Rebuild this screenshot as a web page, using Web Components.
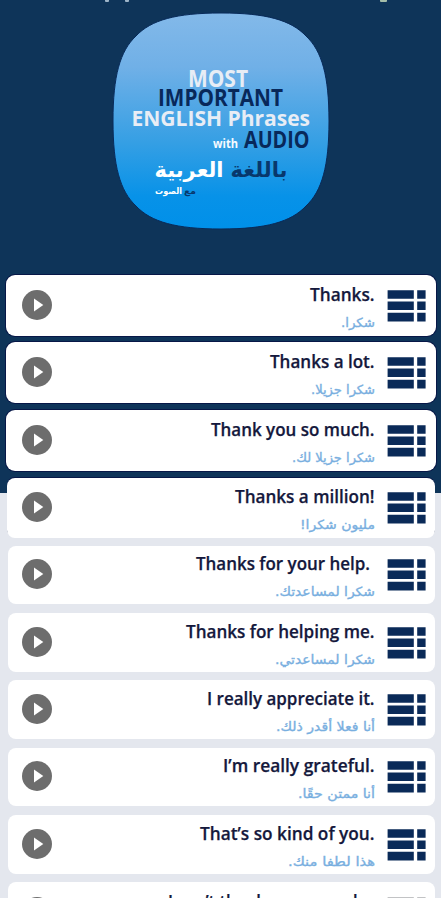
<!DOCTYPE html>
<html lang="en"><head><meta charset="utf-8"><title>Phrases</title>
<style>html,body{margin:0;width:441px;height:900px;overflow:hidden;background:#fff}</style></head><body>
<phrases-screen></phrases-screen>
<script>
const FONT = '"Open Sans","Noto Sans",sans-serif';
class PlayButton extends HTMLElement {
  connectedCallback() {
    this.attachShadow({mode:'open'}).innerHTML = `<style>:host{display:block;width:30px;height:30px}svg{display:block}</style>
    <svg width="30" height="30" viewBox="0 0 30 30"><circle cx="15" cy="15" r="15" fill="#6d6d6d"/><path d="M12 8.5V21.5L21.3 15Z" fill="#fff"/></svg>`;
  }
}
customElements.define('play-button', PlayButton);
class ListIcon extends HTMLElement {
  connectedCallback() {
    const bars = [0,11.3,22.6].map(y=>`<path d="M.6 ${y+.2}h26.2v8.6H.6ZM30.2 ${y+.2}h8.4v8.6h-8.4Z"/>`).join('');
    this.attachShadow({mode:'open'}).innerHTML = `<style>:host{display:block;width:39px;height:33px}svg{display:block}</style>
    <svg width="39" height="33" viewBox="0 0 39 33" style="fill:var(--bar,#0a2a58)">${bars}</svg>`;
  }
}
customElements.define('list-icon', ListIcon);
class PhraseRow extends HTMLElement {
  connectedCallback() {
    const a = n => this.getAttribute(n);
    const right = +(a('right')||374.5);
    const ar = a('ar') ? `<text x="323" y="52" direction="rtl" class="ar" textLength="${375-a('al')}" lengthAdjust="spacingAndGlyphs">${a('ar')}</text>` : '';
    this.attachShadow({mode:'open'}).innerHTML = `<style>
    :host{display:block;height:67.35px;box-sizing:border-box;padding:1.3px 6.5px 0 7.5px}
    .card{box-sizing:border-box;height:58.5px;border-radius:8px;background:#fff;display:grid;grid-template-columns:30px 323px 39px;padding:13.7px 0 0 14.3px}
    :host([dark]){padding:0 5px 0 6px}
    :host([dark]) .card{height:61px;padding:15px 0 0 15.8px;border-radius:9px;box-shadow:0 0 0 1px #071747}
    :host([mid]){padding:.5px 6px 0 7px}
    :host([mid]) .card{height:60px;padding:14.5px 0 0 14.8px;box-shadow:0 -1px 0 0 #071747}
    :host([last]){--bar:#aeb0b3}
    :host([last]) .card{padding-top:14.8px}
    svg{display:block;margin-top:-15px;height:59px;width:336px;overflow:visible}
    list-icon{margin-left:12.2px}
    .en{font:600 18px ${FONT};fill:#14183c;stroke:#14183c;stroke-width:.25px}
    .ar{font:12.5px "DejaVu Sans",sans-serif;fill:#79afe0;stroke:#79afe0;stroke-width:.35px}
    </style><div class="card"><play-button></play-button>
    <svg viewBox="0 0 336 59"><text x="${right-52}" y="25.5" text-anchor="end" class="en" textLength="${right-a('el')}" lengthAdjust="spacingAndGlyphs">${a('en')}</text>${ar}</svg>
    <list-icon></list-icon></div>`;
  }
}
customElements.define('phrase-row', PhraseRow);
class AppBadge extends HTMLElement {
  connectedCallback() {
    const t=(s,x,y,w,size,fill)=>`<text x="${x}" y="${y}" font-size="${size}" fill="${fill}" font-weight="700" textLength="${w}" lengthAdjust="spacingAndGlyphs">${s}</text>`;
    const r=(s,x,y,w,size,fill)=>`<text x="${x}" y="${y}" font-size="${size}" fill="${fill}" direction="rtl" font-weight="700" style="font-family:'DejaVu Sans',sans-serif" textLength="${w}" lengthAdjust="spacingAndGlyphs">${s}</text>`;
    this.attachShadow({mode:'open'}).innerHTML = `<style>:host{display:block;width:216px;height:216px}svg{display:block;overflow:visible}text{font-family:${FONT}}</style>
    <svg width="216" height="216" viewBox="0 0 216 216"><defs><linearGradient id="g" x2="0" y2="1"><stop stop-color="#83b9e9"/><stop offset=".25" stop-color="#70b0e7"/><stop offset=".6" stop-color="#359fe4"/><stop offset=".85" stop-color="#0792e8"/><stop offset="1" stop-color="#0090e9"/></linearGradient></defs>
    <path d="M108 0C153 0 178 7 193 23C209 38 216 63 216 108S209 178 193 193C178 209 153 216 108 216S38 209 23 193C7 178 0 153 0 108S7 38 23 23C38 7 63 0 108 0Z" fill="url(#g)" stroke="#082a59"/>
    ${t('MOST',75,73.5,60,22.5,'#e8edf5')}${t('IMPORTANT',45,92.7,125,22.5,'#08285a')}${t('ENGLISH Phrases',18.5,112.5,178.5,22,'#e8edf5')}
    ${t('with',100,134.5,25,12.5,'#f6faff')}${t('AUDIO',131,134.5,65.5,22.5,'#08285a')}
    ${r('باللغة',174.5,164,57,21,'#08376c')}${r('العربية',110.5,164,69,21,'#fff')}
    ${r('مع',83,181,12,9,'#08376c')}${r('الصوت',69,181,27,9,'#fff')}</svg>`;
  }
}
customElements.define('app-badge', AppBadge);
const rows = [
 ['Thanks.',310,'شكرا.',341],['Thanks a lot.',270,'شكرا جزيلا.',311],['Thank you so much.',211,'شكرا جزيلا لك.',292],
 ['Thanks a million!',235,'مليون شكرا!',300],['Thanks for your help.',196,'شكرا لمساعدتك.',275,370],['Thanks for helping me.',186,'شكرا لمساعدتي.',275],
 ['I really appreciate it.',207,'أنا فعلا أقدر ذلك.',276],['I’m really grateful.',223,'أنا ممتن حقًا.',298],['That’s so kind of you.',200,'هذا لطفا منك.',288],
 ['I can’t thank you enough.',168,'',0,368]];
class PhrasesScreen extends HTMLElement {
  connectedCallback() {
    this.attachShadow({mode:'open'}).innerHTML = `<style>
    :host{display:block;box-sizing:border-box;width:441px;height:898px;overflow:hidden;position:relative;background:linear-gradient(#0e3459 0 493px,#e4e7ee 493px)}
    header{display:flex;justify-content:center;height:275px;box-sizing:border-box;padding-top:13px}
    i{position:absolute;top:0;height:2px;background:#9db4c8;border-radius:0 0 1px 1px}
    </style><i style="left:105px;width:4px"></i><i style="left:125px;width:4px"></i><i style="left:380px;width:7px;background:#a4bda9"></i>
    <header><app-badge></app-badge></header><main>${rows.map(([en,el,ar,al,right],i)=>`<phrase-row ${i<3?'dark':i===3?'mid':i===9?'last':''} en="${en}" el="${el}" ar="${ar}" al="${al}" ${right?`right="${right}"`:''}></phrase-row>`).join('')}</main>`;
  }
}
customElements.define('phrases-screen', PhrasesScreen);
</script></body></html>
